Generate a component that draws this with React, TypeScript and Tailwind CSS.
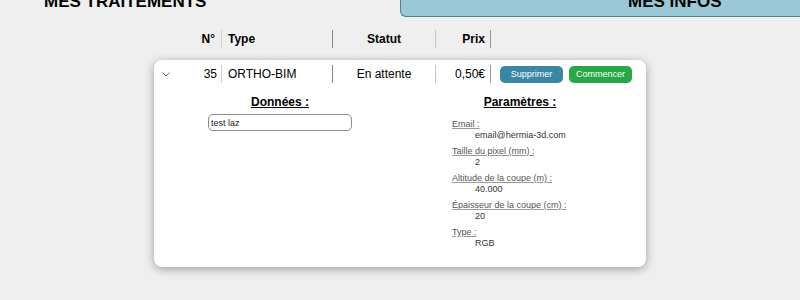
const PARAMS = [
  { label: 'Email :', value: 'email@hermia-3d.com' },
  { label: 'Taille du pixel (mm) :', value: '2' },
  { label: 'Altitude de la coupe (m) :', value: '40.000' },
  { label: 'Épaisseur de la coupe (cm) :', value: '20' },
  { label: 'Type :', value: 'RGB' },
]

function Chevron() {
  return (
    <svg width="8" height="5" viewBox="0 0 8 5" fill="none" className="block">
      <path d="M0.8 0.8 L4 4 L7.2 0.8" stroke="#666" strokeWidth="1" strokeLinecap="round" />
    </svg>
  )
}

export default function App() {
  return (
    <div className="min-h-[300px] overflow-hidden bg-[#efefef] font-['Liberation_Sans',Arial,sans-serif] text-black">
      {/* Top tabs */}
      <div className="flex h-[40px] -mt-[23px] items-end">
        <div className="w-[400px] pl-[44px] pb-[5px] text-[17px] font-bold leading-[20px]">
          MES TRAITEMENTS
        </div>
        <div className="flex h-full flex-1 items-end rounded-bl-[6px] border-b border-l border-[#52808d] bg-[#99c9d7] pl-[227px] pb-[4px] text-[17px] font-bold leading-[20px]">
          MES INFOS
        </div>
      </div>

      {/* Table header */}
      <div className="mt-[13px] ml-[154px] flex h-[18px] text-[12px] font-bold leading-[18px]">
        <div className="w-[68px] border-r border-[#d0d0d0] pr-[6px] text-right">N°</div>
        <div className="w-[111px] border-r border-[#888] pl-[6px]">Type</div>
        <div className="w-[103px] border-r border-[#c4c4c4] text-center">Statut</div>
        <div className="w-[55px] border-r border-[#999] pr-[5px] text-right">Prix</div>
      </div>

      {/* Card */}
      <div className="mt-[12px] ml-[154px] w-[492px] rounded-[8px] bg-white pt-[5px] pb-[13px] shadow-[0_2px_10px_rgba(0,0,0,0.35)]">
        <div className="flex h-[18px] items-center text-[12px] leading-[18px]">
          <div className="flex h-full w-[68px] items-center justify-between border-r border-[#d0d0d0] pl-[8px] pr-[4px]">
            <Chevron />
            <span>35</span>
          </div>
          <div className="h-full w-[111px] border-r border-[#888] pl-[6px]">ORTHO-BIM</div>
          <div className="h-full w-[103px] border-r border-[#c4c4c4] text-center">En attente</div>
          <div className="h-full w-[55px] border-r border-[#999] pr-[5px] text-right">0,50€</div>
          <div className="flex gap-[6px] pl-[9px]">
            <button className="h-[17px] w-[63px] rounded-[5px] bg-[#3a87a5] text-[9px] leading-[17px] text-white">
              Supprimer
            </button>
            <button className="h-[17px] w-[63px] rounded-[5px] bg-[#28a745] text-[9px] leading-[17px] text-white">
              Commencer
            </button>
          </div>
        </div>

        <div className="mt-[12px] flex">
          {/* Données */}
          <div className="flex w-[252px] flex-col items-center">
            <h3 className="text-[12px] font-bold leading-[14px] underline">Données :</h3>
            <input
              readOnly
              value="test laz"
              className="mt-[5px] h-[17px] w-[144px] rounded-[5px] border border-[#8c8c8c] px-[2px] text-[9px] text-[#222] outline-none"
            />
          </div>

          {/* Paramètres */}
          <div className="flex-1">
            <h3 className="w-[228px] text-center text-[12px] font-bold leading-[14px] underline">Paramètres :</h3>
            <div className="mt-[10px] ml-[46px] text-[9px] leading-[11px]">
              {PARAMS.map((p) => (
                <div key={p.label} className="mb-[5px]">
                  <div className="text-[#555] underline decoration-[#999]">{p.label}</div>
                  <div className="pl-[23px] text-[#333]">{p.value}</div>
                </div>
              ))}
            </div>
          </div>
        </div>
      </div>
    </div>
  )
}
